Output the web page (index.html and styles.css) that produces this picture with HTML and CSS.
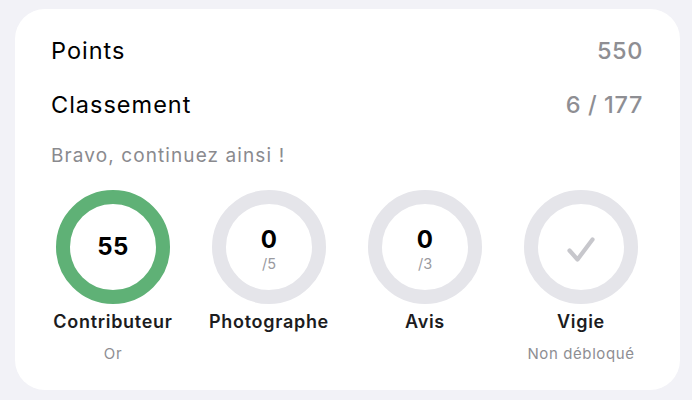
FILE: index.html
```html
<!DOCTYPE html>
<html lang="fr">
<head>
<meta charset="utf-8">
<link rel="stylesheet" href="styles.css">
</head>
<body>
<div class="card">
  <div class="row"><span class="label">Points</span><span class="value">550</span></div>
  <div class="row row2"><span class="label">Classement</span><span class="value">6 / 177</span></div>
  <div class="note">Bravo, continuez ainsi !</div>
  <div class="badges">
    <div class="badge">
      <div class="ring ring-green"><span class="num">55</span></div>
      <div class="bname">Contributeur</div>
      <div class="bsub">Or</div>
    </div>
    <div class="badge">
      <div class="ring"><span class="num">0</span><span class="den">/5</span></div>
      <div class="bname">Photographe</div>
    </div>
    <div class="badge">
      <div class="ring"><span class="num">0</span><span class="den">/3</span></div>
      <div class="bname">Avis</div>
    </div>
    <div class="badge">
      <div class="ring">
        <svg class="check" width="32" height="30" viewBox="0 0 32 30"><path d="M4.5 15.5 L12.5 24.5 L27.5 4.5" fill="none" stroke="#c7c7cc" stroke-width="4.2" stroke-linecap="round" stroke-linejoin="round"/></svg>
      </div>
      <div class="bname">Vigie</div>
      <div class="bsub">Non débloqué</div>
    </div>
  </div>
</div>
</body>
</html>
```

FILE: styles.css
```css
* { box-sizing: border-box; }
html, body { margin: 0; padding: 0; }
body {
  background: #f2f2f7;
  width: 692px;
  height: 400px;
  font-family: "Inter", "Roboto", "Liberation Sans", sans-serif;
  color: #000;
  padding-top: 9px;
  padding-left: 15px;
}
.card {
  width: 665px;
  height: 381px;
  background: #fff;
  border-radius: 30px;
  padding: 24px 37px 0 36px;
}
.row {
  display: flex;
  justify-content: space-between;
  align-items: center;
  height: 34px;
}
.row2 { margin-top: 20px; }
.label { font-size: 23.5px; color: #000; letter-spacing: 1px; }
.value { font-size: 23.5px; font-weight: 500; color: #8e8e93; letter-spacing: 0.6px; }
.note {
  margin-top: 25px;
  line-height: 20px;
  font-size: 19px;
  color: #8a8a8e;
  letter-spacing: 1.1px;
}
.badges {
  display: grid;
  grid-template-columns: repeat(4, 156px);
  margin-top: 24px;
  margin-left: -16px;
}
.badge {
  display: flex;
  flex-direction: column;
  align-items: center;
}
.ring {
  width: 114px;
  height: 114px;
  border-radius: 50%;
  border: 14px solid #e5e5ea;
  display: flex;
  flex-direction: column;
  align-items: center;
  justify-content: center;
}
.ring-green { border-color: #5fb176; }
.num { font-size: 24px; font-weight: 700; line-height: 26px; letter-spacing: 0.3px; }
.den { font-size: 14.5px; color: #9a9aa0; line-height: 18px; margin-top: 2px; }
.ring .num:not(:only-child) { margin-top: 6px; }
.check { margin-top: 6px; }
.bname {
  margin-top: 7px;
  font-size: 18px;
  font-weight: 600;
  line-height: 22px;
  color: #1c1c1e;
  letter-spacing: 0.7px;
}
.bsub {
  margin-top: 12px;
  font-size: 15px;
  line-height: 18px;
  color: #8e8e93;
  letter-spacing: 0.6px;
}
```
